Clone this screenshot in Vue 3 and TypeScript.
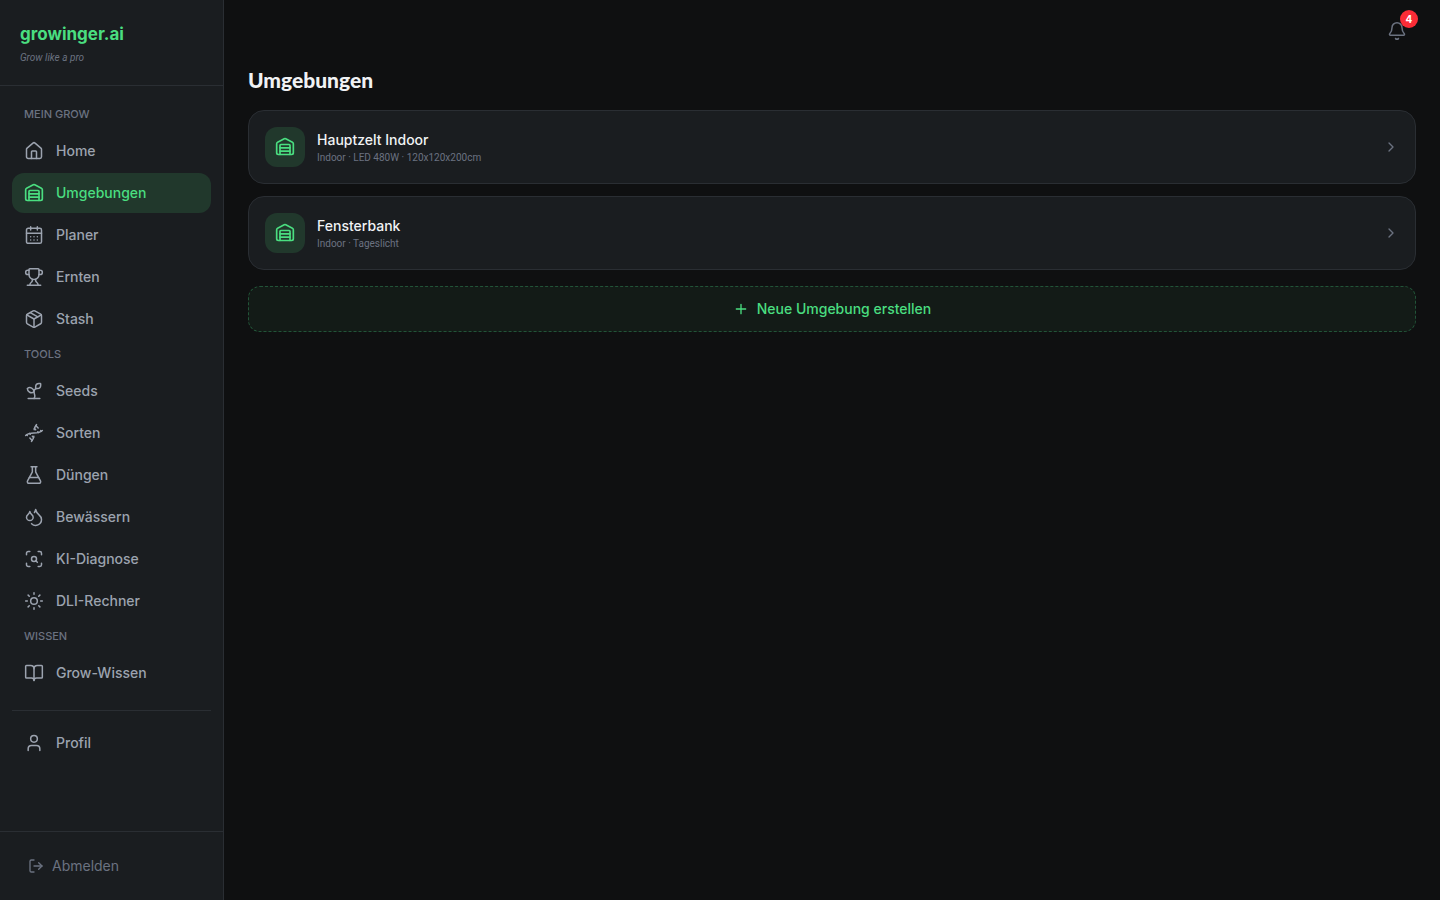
<script setup lang="ts">
interface NavItem {
  label: string
  icon: string[]
  active?: boolean
}
interface NavGroup {
  title: string
  items: NavItem[]
}

const warehouse: string[] = [
  'M18 21V10a1 1 0 0 0-1-1H7a1 1 0 0 0-1 1v11',
  'M22 19a2 2 0 0 1-2 2H4a2 2 0 0 1-2-2V8a2 2 0 0 1 1.132-1.803l7.95-3.974a2 2 0 0 1 1.837 0l7.948 3.974A2 2 0 0 1 22 8z',
  'M6 13h12',
  'M6 17h12',
]

const groups: NavGroup[] = [
  {
    title: 'MEIN GROW',
    items: [
      {
        label: 'Home',
        icon: [
          'M15 21v-8a1 1 0 0 0-1-1h-4a1 1 0 0 0-1 1v8',
          'M3 10a2 2 0 0 1 .709-1.528l7-5.999a2 2 0 0 1 2.582 0l7 5.999A2 2 0 0 1 21 10v9a2 2 0 0 1-2 2H5a2 2 0 0 1-2-2z',
        ],
      },
      { label: 'Umgebungen', icon: warehouse, active: true },
      {
        label: 'Planer',
        icon: [
          'M8 2v4M16 2v4M3 10h18',
          'M5 4h14a2 2 0 0 1 2 2v14a2 2 0 0 1-2 2H5a2 2 0 0 1-2-2V6a2 2 0 0 1 2-2z',
          'M8 14h.01M12 14h.01M16 14h.01M8 18h.01M12 18h.01M16 18h.01',
        ],
      },
      {
        label: 'Ernten',
        icon: [
          'M10 14.66v1.626a2 2 0 0 1-.976 1.696A5 5 0 0 0 7 21.978',
          'M14 14.66v1.626a2 2 0 0 0 .976 1.696A5 5 0 0 1 17 21.978',
          'M18 9h1.5a1 1 0 0 0 0-5H18',
          'M4 22h16',
          'M6 9a6 6 0 0 0 12 0V3a1 1 0 0 0-1-1H7a1 1 0 0 0-1 1z',
          'M6 9H4.5a1 1 0 0 1 0-5H6',
        ],
      },
      {
        label: 'Stash',
        icon: [
          'M11 21.73a2 2 0 0 0 2 0l7-4A2 2 0 0 0 21 16V8a2 2 0 0 0-1-1.73l-7-4a2 2 0 0 0-2 0l-7 4A2 2 0 0 0 3 8v8a2 2 0 0 0 1 1.73z',
          'M12 22V12',
          'M3.29 7 12 12l8.71-5',
          'm7.5 4.27 9 5.15',
        ],
      },
    ],
  },
  {
    title: 'TOOLS',
    items: [
      {
        label: 'Seeds',
        icon: [
          'M14 9.536V7a4 4 0 0 1 4-4h1.5a.5.5 0 0 1 .5.5V5a4 4 0 0 1-4 4 4 4 0 0 0-4 4c0 2 1 3 1 5a5 5 0 0 1-1 3',
          'M4 9a5 5 0 0 1 8 4 5 5 0 0 1-8-4',
          'M5 21h14',
        ],
      },
      {
        label: 'Sorten',
        icon: [
          'm10 16 1.5 1.5',
          'm14 8-1.5-1.5',
          'M15 2c-1.798 1.998-2.518 3.995-2.807 5.993',
          'm16.5 10.5 1 1',
          'm17 6-2.891-2.891',
          'M2 15c6.667-6 13.333 0 20-6',
          'm20 9 .891.891',
          'M3.109 14.109 4 15',
          'm6.5 12.5 1 1',
          'm7 18 2.891 2.891',
          'M9 22c1.798-1.998 2.518-3.995 2.807-5.993',
        ],
      },
      {
        label: 'Düngen',
        icon: [
          'M14 2v6a2 2 0 0 0 .245.96l5.51 10.08A2 2 0 0 1 18 22H6a2 2 0 0 1-1.755-2.96l5.51-10.08A2 2 0 0 0 10 8V2',
          'M6.453 15h11.094',
          'M8.5 2h7',
        ],
      },
      {
        label: 'Bewässern',
        icon: [
          'M7 16.3c2.2 0 4-1.83 4-4.05 0-1.16-.57-2.26-1.71-3.19S7.29 6.75 7 5.3c-.29 1.45-1.14 2.84-2.29 3.76S3 11.1 3 12.25c0 2.22 1.8 4.05 4 4.05z',
          'M12.56 6.6A10.97 10.97 0 0 0 14 3.02c.5 2.5 2 4.9 4 6.5s3 3.5 3 5.5a6.98 6.98 0 0 1-11.91 4.97',
        ],
      },
      {
        label: 'KI-Diagnose',
        icon: [
          'M3 7V5a2 2 0 0 1 2-2h2',
          'M17 3h2a2 2 0 0 1 2 2v2',
          'M21 17v2a2 2 0 0 1-2 2h-2',
          'M7 21H5a2 2 0 0 1-2-2v-2',
          'M9 12a3 3 0 1 0 6 0a3 3 0 1 0-6 0',
          'm16 16-1.9-1.9',
        ],
      },
      {
        label: 'DLI-Rechner',
        icon: [
          'M8 12a4 4 0 1 0 8 0a4 4 0 1 0-8 0',
          'M12 2v2M12 20v2M4.93 4.93l1.41 1.41M17.66 17.66l1.41 1.41M2 12h2M20 12h2M6.34 17.66l-1.41 1.41M19.07 4.93l-1.41 1.41',
        ],
      },
    ],
  },
  {
    title: 'WISSEN',
    items: [
      {
        label: 'Grow-Wissen',
        icon: [
          'M12 7v14',
          'M3 18a1 1 0 0 1-1-1V4a1 1 0 0 1 1-1h5a4 4 0 0 1 4 4 4 4 0 0 1 4-4h5a1 1 0 0 1 1 1v13a1 1 0 0 1-1 1h-6a3 3 0 0 0-3 3 3 3 0 0 0-3-3z',
        ],
      },
    ],
  },
]

const environments = [
  { name: 'Hauptzelt Indoor', detail: 'Indoor · LED 480W · 120x120x200cm' },
  { name: 'Fensterbank', detail: 'Indoor · Tageslicht' },
]
</script>

<template>
  <div class="shell">
    <aside class="sidebar">
      <div class="brand">
        <div class="brand-name">growinger.ai</div>
        <div class="brand-claim">Grow like a pro</div>
      </div>
      <nav class="nav">
        <section v-for="group in groups" :key="group.title" class="group">
          <h2 class="group-title">{{ group.title }}</h2>
          <a
            v-for="item in group.items"
            :key="item.label"
            href="#"
            class="nav-item"
            :class="{ active: item.active }"
          >
            <svg class="icon" viewBox="0 0 24 24" aria-hidden="true">
              <path v-for="d in item.icon" :key="d" :d="d" />
            </svg>
            <span>{{ item.label }}</span>
          </a>
        </section>
        <div class="account">
          <a href="#" class="nav-item">
            <svg class="icon" viewBox="0 0 24 24" aria-hidden="true">
              <path d="M19 21v-2a4 4 0 0 0-4-4H9a4 4 0 0 0-4 4v2" />
              <circle cx="12" cy="7" r="4" />
            </svg>
            <span>Profil</span>
          </a>
        </div>
      </nav>
      <div class="sidebar-foot">
        <button type="button" class="logout">
          <svg class="icon small" viewBox="0 0 24 24" aria-hidden="true">
            <path d="m16 17 5-5-5-5" />
            <path d="M21 12H9" />
            <path d="M9 21H5a2 2 0 0 1-2-2V5a2 2 0 0 1 2-2h4" />
          </svg>
          <span>Abmelden</span>
        </button>
      </div>
    </aside>

    <div class="content">
      <header class="topbar">
        <button type="button" class="bell" aria-label="Benachrichtigungen">
          <svg class="icon" viewBox="0 0 24 24" aria-hidden="true">
            <path d="M10.268 21a2 2 0 0 0 3.464 0" />
            <path d="M3.262 15.326A1 1 0 0 0 4 17h16a1 1 0 0 0 .74-1.673C19.41 13.956 18 12.499 18 8A6 6 0 0 0 6 8c0 4.499-1.411 5.956-2.738 7.326" />
          </svg>
          <span class="badge">4</span>
        </button>
      </header>
      <main class="main">
        <h1 class="title">Umgebungen</h1>
        <div class="list">
          <a v-for="env in environments" :key="env.name" href="#" class="card">
            <span class="tile">
              <svg class="icon" viewBox="0 0 24 24" aria-hidden="true">
                <path v-for="d in warehouse" :key="d" :d="d" />
              </svg>
            </span>
            <span class="card-text">
              <span class="card-name">{{ env.name }}</span>
              <span class="card-detail">{{ env.detail }}</span>
            </span>
            <svg class="icon small chevron" viewBox="0 0 24 24" aria-hidden="true">
              <path d="m9 18 6-6-6-6" />
            </svg>
          </a>
        </div>
        <button type="button" class="create">
          <svg class="icon small" viewBox="0 0 24 24" aria-hidden="true">
            <path d="M5 12h14M12 5v14" />
          </svg>
          <span>Neue Umgebung erstellen</span>
        </button>
      </main>
    </div>
  </div>
</template>

<style>
body {
  margin: 0;
  background: #0f1011;
}
</style>

<style scoped>
.shell,
.shell * {
  box-sizing: border-box;
}
.shell {
  display: flex;
  min-height: 100vh;
  background: #0f1011;
  color: #f0f2f4;
  font-family: Inter, 'Noto Sans', sans-serif;
  font-size: 14px;
  line-height: 20px;
}
a {
  color: inherit;
  text-decoration: none;
}
button {
  font: inherit;
  cursor: pointer;
}
.icon {
  width: 20px;
  height: 20px;
  flex: none;
  fill: none;
  stroke: currentColor;
  stroke-width: 1.8;
  stroke-linecap: round;
  stroke-linejoin: round;
}
.icon.small {
  width: 16px;
  height: 16px;
  stroke-width: 2;
}
.active .icon,
.tile .icon {
  stroke-width: 2;
}
.sidebar {
  display: flex;
  flex-direction: column;
  flex: none;
  width: 224px;
  background: #1a1d20;
  border-right: 1px solid #2a2e33;
}
.brand {
  padding: 20px;
  border-bottom: 1px solid #2a2e33;
}
.brand-name {
  color: #4ade80;
  font-size: 17px;
  font-weight: 700;
  line-height: 28px;
}
.brand-claim {
  margin-top: 2px;
  color: #6b7280;
  font-family: Roboto, 'Noto Sans', sans-serif;
  font-size: 10px;
  font-style: italic;
  line-height: 15px;
}
.nav {
  flex: 1;
  padding: 16px 12px;
}
.group {
  display: flow-root;
  margin-bottom: 1px;
}
.group-title {
  margin: 0;
  padding: 4px 12px 8px;
  color: #6b7280;
  font-size: 11px;
  font-weight: 500;
  line-height: 17px;
}
.nav-item {
  display: flex;
  align-items: center;
  gap: 12px;
  height: 40px;
  margin-bottom: 2px;
  padding: 0 12px;
  border-radius: 12px;
  color: #9ca3af;
  font-weight: 500;
}
.nav-item.active {
  background: #21382c;
  color: #4ade80;
}
.account {
  margin-top: 15px;
  padding-top: 12px;
  border-top: 1px solid #2a2e33;
}
.sidebar-foot {
  padding: 16px 12px;
  border-top: 1px solid #2a2e33;
}
.logout {
  display: flex;
  align-items: center;
  gap: 8px;
  width: 100%;
  height: 36px;
  padding: 0 16px;
  border: 0;
  background: none;
  color: #6b7280;
}
.content {
  flex: 1;
  min-width: 0;
}
.topbar {
  display: flex;
  justify-content: flex-end;
  padding: 12px 24px 0;
}
.bell {
  position: relative;
  display: flex;
  padding: 9px;
  border: 0;
  background: none;
  color: #6b7280;
}
.badge {
  position: absolute;
  top: -2px;
  right: -2px;
  width: 18px;
  height: 18px;
  border-radius: 50%;
  background: #fb2c36;
  color: #fff;
  font-size: 10px;
  font-weight: 700;
  line-height: 18px;
  text-align: center;
}
.main {
  padding: 16px 24px 24px;
}
.title {
  margin: 0 0 16px;
  font-family: Lato, 'Noto Sans', sans-serif;
  font-size: 21px;
  font-weight: 900;
  line-height: 28px;
}
.list {
  display: flex;
  flex-direction: column;
  gap: 12px;
}
.card {
  display: flex;
  align-items: center;
  gap: 12px;
  padding: 16px;
  border: 1px solid #2a2e33;
  border-radius: 16px;
  background: #1a1d20;
}
.tile {
  display: flex;
  align-items: center;
  justify-content: center;
  width: 40px;
  height: 40px;
  border-radius: 12px;
  background: #21382c;
  color: #4ade80;
}
.card-text {
  display: flex;
  flex: 1;
  flex-direction: column;
}
.card-name {
  font-weight: 500;
}
.card-detail {
  color: #6b7280;
  font-family: Roboto, 'Noto Sans', sans-serif;
  font-size: 10px;
  line-height: 15px;
}
.chevron {
  color: #6b7280;
}
.create {
  display: flex;
  align-items: center;
  justify-content: center;
  gap: 8px;
  width: 100%;
  height: 46px;
  margin-top: 16px;
  border: 1px dashed #225438;
  border-radius: 12px;
  background: #131b17;
  color: #4ade80;
  font-weight: 500;
}
</style>
